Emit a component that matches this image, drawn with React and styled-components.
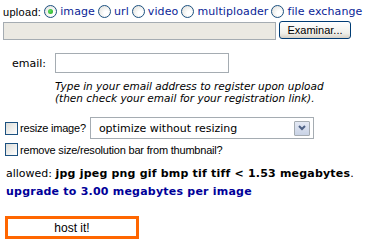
import React from "react";
import styled, { createGlobalStyle } from "styled-components";

const Global = createGlobalStyle`
  html, body { margin: 0; padding: 0; background: #fff; }
  body { font-family: "DejaVu Sans", Verdana, sans-serif; font-size: 11px; color: #000; }
`;

const Page = styled.div`
  width: 368px;
  height: 243px;
  padding: 5px 0 0 3px;
  box-sizing: border-box;
`;

const UploadRow = styled.div`
  display: flex;
  align-items: center;
  height: 13px;
  white-space: nowrap;
`;

const Tahoma = styled.span`
  font-family: "Liberation Sans", Arial, sans-serif;
  font-size: 11px;
  letter-spacing: ${(p) => (p.$ls !== undefined ? p.$ls : -0.2)}px;
  color: #000;
`;

const Radio = styled.span`
  display: inline-block;
  box-sizing: border-box;
  width: 13px;
  height: 13px;
  border-radius: 50%;
  border: 1px solid #1c5180;
  background: radial-gradient(circle at 65% 65%, #ffffff 20%, #dcdcd6 100%);
  position: relative;
  margin: 0 3px 0 ${(p) => p.$ml || 3}px;
  flex: none;
  &::after {
    content: "";
    display: ${(p) => (p.$checked ? "block" : "none")};
    position: absolute;
    left: 3px;
    top: 3px;
    width: 5px;
    height: 5px;
    border-radius: 50%;
    background: radial-gradient(circle at 40% 40%, #5fe35f, #21a121);
  }
`;

const RadioLabel = styled.span`
  color: #0a1e96;
  font-size: 11px;
  letter-spacing: 0.1px;
`;

const FileRow = styled.div`
  display: flex;
  align-items: flex-start;
  margin-top: 3px;
`;

const FileField = styled.div`
  box-sizing: border-box;
  width: 273px;
  height: 18px;
  margin-top: 1px;
  background: #ebe9e2;
  border: 1px solid #a5acb2;
`;

const BrowseButton = styled.div`
  box-sizing: border-box;
  width: 72px;
  height: 18px;
  margin-left: 3px;
  border: 1px solid #003c74;
  border-radius: 3px;
  background: linear-gradient(#ffffff, #f0f0ea 70%, #d6d0c5);
  font-family: "Liberation Sans", Arial, sans-serif;
  font-size: 11px;
  display: flex;
  align-items: center;
  justify-content: center;
`;

const EmailRow = styled.div`
  display: grid;
  grid-template-columns: 52px auto;
  margin-top: 13px;
  align-items: center;
`;

const EmailLabel = styled.span`
  font-size: 11px;
  padding-left: 9px;
`;

const TextInput = styled.div`
  box-sizing: border-box;
  width: 174px;
  height: 20px;
  border: 1px solid #a5acb2;
  background: #fff;
`;

const Hint = styled.div`
  margin: 7px 0 0 52px;
  font-style: italic;
  font-size: 10.5px;
  line-height: 12px;
`;

const CheckRow = styled.div`
  display: flex;
  align-items: center;
  margin-top: ${(p) => p.$mt || 0}px;
  padding-left: 2px;
  white-space: nowrap;
`;

const Check = styled.span`
  display: inline-block;
  box-sizing: border-box;
  width: 13px;
  height: 13px;
  border: 1px solid #1c5180;
  background: linear-gradient(135deg, #dcdcd7, #ffffff);
  margin-right: 2px;
  flex: none;
`;

const Select = styled.div`
  box-sizing: border-box;
  width: 224px;
  height: 22px;
  margin-left: 4px;
  border: 1px solid #a5acb2;
  display: flex;
  align-items: center;
  justify-content: space-between;
  padding: 0 3px 0 8px;
  font-size: 11px;
`;

const SelectArrow = styled.span`
  box-sizing: border-box;
  width: 16px;
  height: 15px;
  border: 1px solid #a5acb2;
  border-radius: 1px;
  background: linear-gradient(#e4e9f4, #c9d3e6);
  display: flex;
  align-items: center;
  justify-content: center;
`;

const Allowed = styled.div`
  margin: 11px 0 0 3px;
  font-size: 11px;
  white-space: nowrap;
  b { font-weight: bold; letter-spacing: 0.2px; }
`;

const Upgrade = styled.div`
  margin: 5px 0 0 3px;
  font-size: 11px;
  font-weight: bold;
  letter-spacing: 0.22px;
  color: #000099;
  white-space: nowrap;
`;

const HostButton = styled.div`
  box-sizing: border-box;
  width: 134px;
  height: 23px;
  margin: 18px 0 0 2px;
  border: 3px solid #ff6600;
  background: #fff;
  display: flex;
  align-items: center;
  justify-content: center;
  font-family: "Liberation Sans", Arial, sans-serif;
  font-size: 12px;
`;

export default function App() {
  return (
    <Page>
      <Global />
      <UploadRow>
        <Tahoma $ls={0.3}>upload:</Tahoma>
        <Radio $checked $ml={3} />
        <RadioLabel>image</RadioLabel>
        <Radio />
        <RadioLabel>url</RadioLabel>
        <Radio />
        <RadioLabel>video</RadioLabel>
        <Radio />
        <RadioLabel>multiploader</RadioLabel>
        <Radio />
        <RadioLabel>file exchange</RadioLabel>
      </UploadRow>
      <FileRow>
        <FileField />
        <BrowseButton>Examinar...</BrowseButton>
      </FileRow>
      <EmailRow>
        <EmailLabel>email:</EmailLabel>
        <TextInput />
      </EmailRow>
      <Hint>
        Type in your email address to register upon upload
        <br />
        (then check your email for your registration link).
      </Hint>
      <CheckRow $mt={13}>
        <Check />
        <Tahoma>resize image?</Tahoma>
        <Select>
          <span>optimize without resizing</span>
          <SelectArrow>
            <svg width="8" height="6" viewBox="0 0 8 6">
              <path d="M1 1 L4 4 L7 1" stroke="#4d6185" strokeWidth="2" fill="none" />
            </svg>
          </SelectArrow>
        </Select>
      </CheckRow>
      <CheckRow $mt={4}>
        <Check />
        <Tahoma>remove size/resolution bar from thumbnail?</Tahoma>
      </CheckRow>
      <Allowed>
        allowed: <b>jpg jpeg png gif bmp tif tiff &lt; 1.53 megabytes</b>.
      </Allowed>
      <Upgrade>upgrade to 3.00 megabytes per image</Upgrade>
      <HostButton>host it!</HostButton>
    </Page>
  );
}
